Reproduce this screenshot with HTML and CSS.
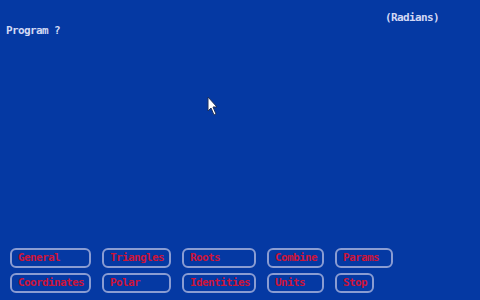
FILE: index.html
```html
<!DOCTYPE html>
<html>
<head>
<meta charset="utf-8">
<link rel="stylesheet" href="styles.css">
</head>
<body>
<div class="screen">
  <div class="status">(Radians)</div>
  <div class="prompt">Program ?</div>
  <div class="space"></div>
  <div class="buttons">
    <div class="btn">General</div>
    <div class="btn">Triangles</div>
    <div class="btn">Roots</div>
    <div class="btn">Combine</div>
    <div class="btn">Params</div>
    <div class="btn">Coordinates</div>
    <div class="btn">Polar</div>
    <div class="btn">Identities</div>
    <div class="btn">Units</div>
    <div class="btn stop">Stop</div>
  </div>
  <svg class="cursor" width="12" height="22" viewBox="0 0 12 22">
    <path d="M1 1 L1 15 L4 12 L7 19 L9 18 L6 11 L10 11 Z" fill="#ffffff" stroke="#20305a" stroke-width="1" stroke-linejoin="round"/>
  </svg>
</div>
</body>
</html>
```
FILE: styles.css
```css
html, body {
  margin: 0;
  padding: 0;
  background: #0539a3;
}
.screen {
  position: relative;
  width: 480px;
  height: 300px;
  display: flex;
  flex-direction: column;
  font-family: "DejaVu Sans Mono", monospace;
  font-weight: bold;
  font-size: 11px;
  letter-spacing: -0.62px;
  line-height: 13px;
  color: #d2d8f4;
}
.status {
  padding: 11px 0 0 385px;
}
.prompt {
  padding: 0 0 0 6px;
}
.space {
  flex: 1;
}
.buttons {
  display: grid;
  grid-template-columns: 81px 69px 74px 57px 58px;
  grid-auto-rows: 20px;
  column-gap: 11px;
  row-gap: 5px;
  padding: 0 0 7px 10px;
}
.btn {
  box-sizing: border-box;
  border: 2px solid #8a9cd2;
  border-radius: 6px;
  color: #cc143a;
  padding: 1px 0 0 6px;
  line-height: 14px;
}
.stop {
  width: 39px;
}
.cursor {
  position: absolute;
  left: 207px;
  top: 96px;
}
```
